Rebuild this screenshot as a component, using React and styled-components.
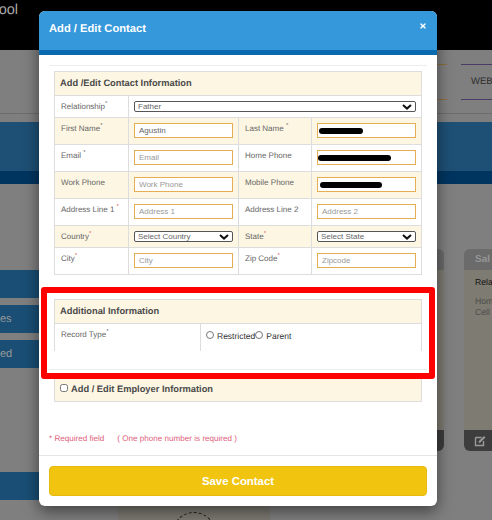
import React from 'react';
import styled, { createGlobalStyle } from 'styled-components';
import { FaTimes } from 'react-icons/fa';

const GlobalStyle = createGlobalStyle`
  html, body {
    margin: 0;
    padding: 0;
    background: #7f7f7f;
  }
  * { box-sizing: border-box; }
`;

const Page = styled.div`
  position: relative;
  width: 492px;
  height: 520px;
  overflow: hidden;
  font-family: "Liberation Sans", Arial, sans-serif;
  text-rendering: geometricPrecision;
`;

// dimmed page behind the modal
const TopBar = styled.div`
  height: 50px;
  background: #000;
  color: #a9a9a9;
  font-size: 14.5px;
  line-height: 20px;
`;

const Brand = styled.div`
  width: 18px;
  overflow: hidden;
  direction: rtl;
  white-space: nowrap;
`;

const NavBar = styled.div`
  height: 64px;
  padding: 14px 0 0 437px;
  display: flex;
  gap: 14px;
  background: #7f7f7f;
  border-bottom: 1px solid #6c6c6c;
`;

const NavTab = styled.div`
  width: ${p => p.$w}px;
  height: 36px;
  border-top: 1px solid ${p => p.$line};
  border-bottom: 1px solid ${p => p.$line};
  font-size: 9.5px;
  color: #2c2c2c;
  line-height: 34px;
  padding-left: 10px;
  white-space: nowrap;
  overflow: hidden;
`;

const Band = styled.div`
  height: 62px;
  margin-top: 8px;
  background: #1e5075;
  border-bottom: 13px solid #003560;
`;

const Content = styled.div`
  display: flex;
`;

const SideMenu = styled.div`
  width: 39px;
  flex: none;
  padding-top: 86px;
  display: flex;
  flex-direction: column;
  gap: 7px;
`;

const SideItem = styled.div`
  height: 28px;
  margin-top: ${p => p.$top || 0}px;
  background: #1a4e74;
  color: #9a9a9a;
  font-size: 11px;
  line-height: 28px;
  white-space: nowrap;
  overflow: hidden;
`;

const Main = styled.div`
  flex: 1;
  min-width: 0;
`;

const CardRow = styled.div`
  display: flex;
  gap: 20px;
  margin: 65px 0 0 225px;
`;

const Card = styled.div`
  width: 180px;
  height: 202px;
  flex: none;
  display: flex;
  flex-direction: column;
  border-radius: 6px;
  overflow: hidden;
  background: #7e7b72;
`;

const CardHead = styled.div`
  height: 21px;
  background: #6b6b6b;
  color: #959595;
  font-size: 10px;
  font-weight: bold;
  line-height: 21px;
  padding-left: 11px;
`;

const CardBody = styled.div`
  flex: 1;
  padding: 7px 0 0 11px;
  font-size: 8.7px;
  line-height: 11px;
  color: #4c4c4a;
`;

const CardStrong = styled.div`
  color: #111;
  margin-bottom: 8px;
`;

const CardFoot = styled.div`
  height: 21px;
  background: #3d3d3d;
  display: flex;
  align-items: center;
  padding-left: 10px;
  color: #8d8d8d;
`;

const PhotoCard = styled.div`
  width: 152px;
  height: 60px;
  margin: 55px 0 0 79px;
  background: #7c7a72;
  padding-top: 6px;
`;

const Avatar = styled.div`
  width: 44px;
  height: 44px;
  margin: 0 auto;
  border-radius: 50%;
  border: 1px dashed #1a1a1a;
`;

// modal
const Modal = styled.div`
  position: absolute;
  left: 39px;
  top: 11px;
  width: 398px;
  height: 495px;
  background: #fff;
  border-radius: 6px;
  box-shadow: 0 5px 15px rgba(0, 0, 0, 0.5);
  display: flex;
  flex-direction: column;
`;

const ModalHeader = styled.div`
  height: 44px;
  flex: none;
  display: flex;
  justify-content: space-between;
  padding: 11px 10px 0 10px;
  background: #3498db;
  border-bottom: 5px solid #0a6ab0;
  border-radius: 6px 6px 0 0;
`;

const ModalTitle = styled.div`
  color: #fff;
  font-size: 11.2px;
  font-weight: bold;
  line-height: 14px;
`;

const CloseBtn = styled.div`
  color: #fff;
  font-size: 8px;
  line-height: 8px;
`;

const ModalBody = styled.div`
  flex: 1;
  padding: 10px 10px 0;
  position: relative;
`;

const Rule = styled.div`
  height: 1px;
  background: #eee;
  margin: 0 0 ${p => p.$after}px;
`;

const Section = styled.div`
  margin: 0 5px ${p => p.$after || 0}px;
  border: 1px solid #ddd;
  border-bottom: ${p => (p.$open ? 'none' : '1px solid #ddd')};
`;

const SectionTitle = styled.div`
  height: 23px;
  padding: 0 0 2px 5px;
  display: flex;
  align-items: center;
  background: #fdf6e3;
  color: #4a4a4a;
  font-size: 9.3px;
  font-weight: bold;
`;

const Row = styled.div`
  display: grid;
  grid-template-columns: ${p => p.$cols || '73px 110px 73px 1fr'};
  height: ${p => p.$h}px;
  background: ${p => (p.$shade ? '#fdf6e3' : '#fff')};
  border-top: 1px solid #ddd;
`;

const Label = styled.div`
  padding: 5px 0 0 6px;
  font-size: 8px;
  line-height: 11px;
  color: #666;
  border-left: ${p => (p.$first ? 'none' : '1px solid #ddd')};
  white-space: nowrap;
`;

const Req = styled.sup`
  font-size: 6px;
  line-height: 0;
  color: ${p => (p.$red ? '#d9534f' : '#666')};
`;

const Cell = styled.div`
  position: relative;
  padding: 5px 5px 0;
  border-left: 1px solid #ddd;
`;

const TextInput = styled.input`
  display: block;
  width: 100%;
  height: 15px;
  padding: 0 4px;
  border: 1px solid #e5ae54;
  border-radius: 0;
  background: #fff;
  font-family: inherit;
  font-size: 8px;
  color: #666;
  outline: none;
  &::placeholder { color: #999; opacity: 1; }
`;

const Redacted = styled.span`
  position: absolute;
  left: ${p => p.$left}px;
  top: 10px;
  width: ${p => p.$w}px;
  height: 6px;
  background: #000;
  border-radius: 3px;
`;

const SelectWrap = styled.div`
  position: relative;
  height: 11px;
`;

const Select = styled.select`
  display: block;
  width: 100%;
  height: 11px;
  padding: 0 0 0 3px;
  border: 1px solid #555;
  border-radius: 2px;
  background: #fff;
  appearance: none;
  font-family: inherit;
  font-size: 8px;
  line-height: 9px;
  color: #666;
  outline: none;
`;

const Chevron = styled.svg`
  position: absolute;
  right: 4px;
  top: 3px;
  width: 10px;
  height: 6px;
  pointer-events: none;
`;

const Choices = styled.div`
  display: flex;
  padding: 7px 0 0 5px;
  border-left: 1px solid #ddd;
  font-size: 8.5px;
  color: #333;
`;

const Choice = styled.label`
  display: flex;
  align-items: center;
  align-self: flex-start;
`;

const Radio = styled.input`
  width: 8px;
  height: 8px;
  margin: 0 3px 2px 0;
`;

const TickBox = styled.input`
  width: 8px;
  height: 8px;
  margin: 0 3px 2px 0;
`;

const Notes = styled.div`
  margin-top: 31px;
  font-size: 8.1px;
  line-height: 12px;
  color: #e0607a;
  display: flex;
  gap: 13px;
`;

const ModalFooter = styled.div`
  height: 51px;
  flex: none;
  padding: 10px;
  border-top: 1px solid #e5e5e5;
`;

const SaveButton = styled.button`
  display: block;
  width: 100%;
  height: 30px;
  border: 1px solid #e5b90f;
  border-radius: 4px;
  background: #f1c40f;
  color: #fff;
  font-family: inherit;
  font-size: 11.4px;
  font-weight: bold;
`;

const Highlight = styled.div`
  position: absolute;
  left: 2px;
  top: 232px;
  width: 394px;
  height: 92px;
  border: 6px solid #f00;
  border-radius: 3px;
  pointer-events: none;
`;

const Dropdown = ({ value }) => (
  <SelectWrap>
    <Select defaultValue={value}>
      <option>{value}</option>
    </Select>
    <Chevron viewBox="0 0 10 6">
      <path d="M1 1l4 3.6L9 1" fill="none" stroke="#111" strokeWidth="2" />
    </Chevron>
  </SelectWrap>
);

const Field = ({ placeholder, value, redact }) => (
  <Cell>
    <TextInput placeholder={placeholder} defaultValue={value} />
    {redact && <Redacted $left={redact[0]} $w={redact[1]} />}
  </Cell>
);

export default function App() {
  return (
    <Page>
      <GlobalStyle />
      <TopBar><Brand>ool</Brand></TopBar>
      <NavBar>
        <NavTab $w={10} $line="#8f6c3c" />
        <NavTab $w={60} $line="#4b3a66">WEB</NavTab>
      </NavBar>
      <Band />
      <Content>
        <SideMenu>
          <SideItem />
          <SideItem>es</SideItem>
          <SideItem>ed</SideItem>
          <SideItem $top={97} />
        </SideMenu>
        <Main>
          <CardRow>
            <Card>
              <CardHead />
              <CardBody />
              <CardFoot />
            </Card>
            <Card>
              <CardHead>Sal A</CardHead>
              <CardBody>
                <CardStrong>Relationship</CardStrong>
                Home Phone<br />Cell Phone
              </CardBody>
              <CardFoot>
                <svg width="12" height="12" viewBox="0 0 12 12">
                  <path d="M1.5 2.5h6M1.5 2.5v8h8V6" fill="none" stroke="#9a9a9a" strokeWidth="1.4" />
                  <path d="M4.5 8l.4-2L10 1l1.4 1.4-5 5z" fill="#9a9a9a" />
                </svg>
              </CardFoot>
            </Card>
          </CardRow>
          <PhotoCard><Avatar /></PhotoCard>
        </Main>
      </Content>

      <Modal>
        <ModalHeader>
          <ModalTitle>Add / Edit Contact</ModalTitle>
          <CloseBtn><FaTimes /></CloseBtn>
        </ModalHeader>
        <ModalBody>
          <Rule $after={5} />
          <Section $after={24}>
            <SectionTitle>Add /Edit Contact Information</SectionTitle>
            <Row $h={22} $cols="73px 1fr">
              <Label $first>Relationship<Req>*</Req></Label>
              <Cell><Dropdown value="Father" /></Cell>
            </Row>
            <Row $h={27} $shade>
              <Label $first>First Name<Req>*</Req></Label>
              <Field value="Agustin" />
              <Label>Last Name <Req>*</Req></Label>
              <Field redact={[7, 44]} />
            </Row>
            <Row $h={27}>
              <Label $first>Email <Req>*</Req></Label>
              <Field placeholder="Email" />
              <Label>Home Phone</Label>
              <Field redact={[6, 73]} />
            </Row>
            <Row $h={27} $shade>
              <Label $first>Work Phone</Label>
              <Field placeholder="Work Phone" />
              <Label>Mobile Phone</Label>
              <Field redact={[8, 62]} />
            </Row>
            <Row $h={27}>
              <Label $first>Address Line 1 <Req $red>*</Req></Label>
              <Field placeholder="Address 1" />
              <Label>Address Line 2</Label>
              <Field placeholder="Address 2" />
            </Row>
            <Row $h={22} $shade>
              <Label $first>Country<Req $red>*</Req></Label>
              <Cell><Dropdown value="Select Country" /></Cell>
              <Label>State<Req $red>*</Req></Label>
              <Cell><Dropdown value="Select State" /></Cell>
            </Row>
            <Row $h={27}>
              <Label $first>City<Req $red>*</Req></Label>
              <Field placeholder="City" />
              <Label>Zip Code<Req $red>*</Req></Label>
              <Field placeholder="Zipcode" />
            </Row>
          </Section>
          <Section $open $after={18}>
            <SectionTitle>Additional Information</SectionTitle>
            <Row $h={28} $cols="145px 1fr">
              <Label $first>Record Type<Req>*</Req></Label>
              <Choices>
                <Choice><Radio type="radio" name="rt" />Restricted</Choice>
                <Choice><Radio type="radio" name="rt" />Parent</Choice>
              </Choices>
            </Row>
          </Section>
          <Rule $after={7} />
          <Section>
            <SectionTitle>
              <TickBox type="checkbox" />Add / Edit Employer Information
            </SectionTitle>
          </Section>
          <Notes>
            <span>* Required field</span>
            <span>( One phone number is required )</span>
          </Notes>
          <Highlight />
        </ModalBody>
        <ModalFooter>
          <SaveButton>Save Contact</SaveButton>
        </ModalFooter>
      </Modal>
    </Page>
  );
}
